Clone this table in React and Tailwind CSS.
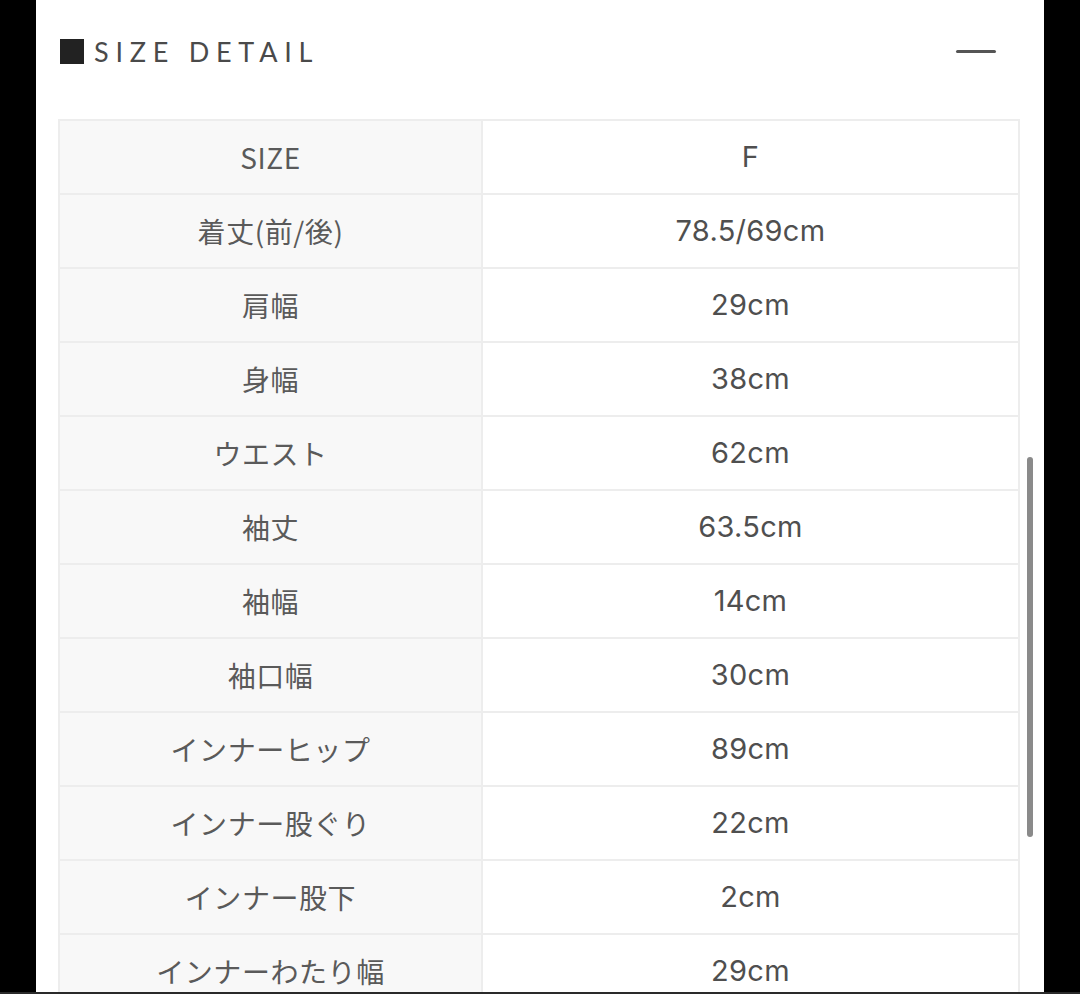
import React from "react";

const rows = [
  ["SIZE", "F"],
  ["着丈(前/後)", "78.5/69cm"],
  ["肩幅", "29cm"],
  ["身幅", "38cm"],
  ["ウエスト", "62cm"],
  ["袖丈", "63.5cm"],
  ["袖幅", "14cm"],
  ["袖口幅", "30cm"],
  ["インナーヒップ", "89cm"],
  ["インナー股ぐり", "22cm"],
  ["インナー股下", "2cm"],
  ["インナーわたり幅", "29cm"],
];

export default function App() {
  return (
    <div className="w-[1080px] h-[994px] bg-black overflow-hidden flex flex-col">
      <div className="relative flex-1 ml-[36px] w-[1008px] bg-white overflow-hidden">
        <div className="h-[119px] flex items-center pl-[24px] pr-[48px] pb-[17px]">
          <div className="w-[24px] h-[25px] bg-[#222]" />
          <div
            className="ml-[10px] text-[27px] tracking-[0.25em] text-[#4a4a4a] leading-none"
            style={{ fontFamily: '"Lato", "Liberation Sans", sans-serif' }}
          >
            SIZE DETAIL
          </div>
          <div className="ml-auto w-[40px] h-[3px] bg-[#555] rounded-full" />
        </div>
        <div
          className="ml-[22px] w-[962px] border-t-2 border-l-2 border-r-2 border-[#ededed]"
          style={{ fontFamily: '"Noto Sans CJK JP", "Noto Sans", sans-serif' }}
        >
          {rows.map(([k, v], i) => (
            <div key={i} className="flex h-[74px] border-b-2 border-[#ededed]">
              <div className="w-[423px] shrink-0 bg-[#f8f8f8] border-r-2 border-[#ededed] flex items-center justify-center text-[28px] tracking-[0.02em] text-[#5a5a5a]">
                {k}
              </div>
              <div
                className="flex-1 flex items-center justify-center text-[29px] text-[#4f4f4f] tracking-[0.01em]"
                style={{ fontFamily: '"Inter", "Noto Sans", sans-serif' }}
              >
                {v}
              </div>
            </div>
          ))}
        </div>
        <div className="absolute left-[991px] top-[457px] w-[6px] h-[380px] rounded-full bg-[#8a8a8a]" />
      </div>
      <div className="h-[2px] bg-[#2a2a2a]" />
    </div>
  );
}
